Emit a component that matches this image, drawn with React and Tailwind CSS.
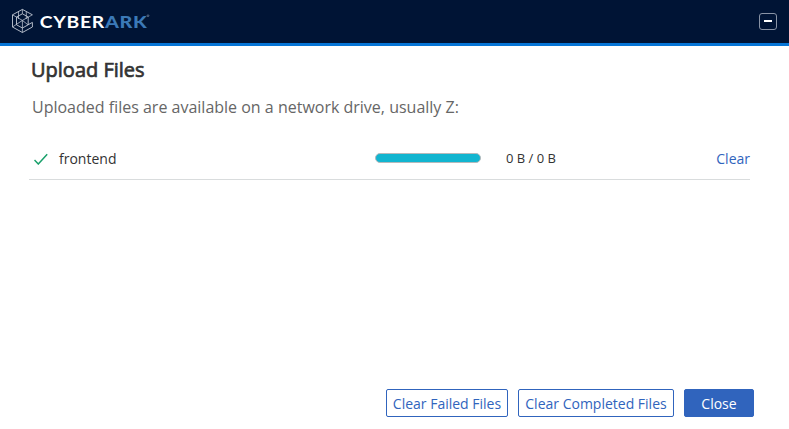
function CyberArkLogo() {
  return (
    <svg width="142" height="28" viewBox="0 0 142 28" className="block" role="img" aria-label="CyberArk">
      <g fill="none" stroke="#c3cad5" strokeWidth="0.9" strokeLinejoin="round">
        <path d="M21.4 7.8 11.4 2.4 1.5 7.8V20L11.4 25.5 21.4 20V15.4L17 17.8" />
        <path d="M5.5 10 11.4 6.8 17.2 10V17.8L11.4 21 5.5 17.8Z" />
        <path d="M1.5 7.8 11.4 13.4 21.4 7.8M11.4 13.4V25.5M1.5 20 11.4 13.4M11.4 13.4 17 17.8M11.4 2.4V6.8M7.5 4.6V12M15.3 4.6V12" strokeWidth="0.75" />
      </g>
      <text x="28.8" y="21.2" fontFamily="Lato, sans-serif" fontSize="17.2" fontWeight="700" letterSpacing="0.6" fill="#ffffff" textLength="65" lengthAdjust="spacingAndGlyphs">CYBER</text>
      <text x="94" y="21.2" fontFamily="Lato, sans-serif" fontSize="17.2" fontWeight="900" letterSpacing="0.6" fill="#3b79b7" textLength="42.5" lengthAdjust="spacingAndGlyphs">ARK</text>
      <circle cx="137" cy="8.7" r="0.9" fill="none" stroke="#8e9bb0" strokeWidth="0.6" />
    </svg>
  );
}

export default function App() {
  return (
    <div className="flex h-[429px] w-[789px] flex-col overflow-hidden bg-white font-['Open_Sans',sans-serif] text-[#333]">
      <header className="flex h-[46px] shrink-0 items-start justify-between border-b-[3px] border-[#0675d6] bg-[#001435] pl-[11px] pr-3">
        <div className="pt-[7px]"><CyberArkLogo /></div>
        <button aria-label="Minimize" className="mt-[13px] flex h-[17px] w-[18px] justify-center rounded-[3px] border border-[#8993a5] pt-[6px]">
          <span className="h-[2px] w-2 bg-white" />
        </button>
      </header>
      <main className="flex flex-1 flex-col pl-[29px] pr-[35px]">
        <h1 className="mt-[10px] pl-[2px] text-[20px] leading-[28px] [-webkit-text-stroke:0.7px_#333]">Upload Files</h1>
        <p className="mt-[11px] pl-[3px] text-[16px] leading-6 text-[#666]">Uploaded files are available on a network drive, usually Z:</p>
        <div className="mt-[20px] mr-1 flex h-[41px] items-center border-b border-[#d9dcdd]">
          <svg width="14" height="12" viewBox="0 0 14 12" className="ml-[5px]" fill="none" stroke="#18a06a" strokeWidth="1.5">
            <path d="M.5 7 4.3 11 13.2 1.2" />
          </svg>
          <span className="ml-[11px] w-[316px] text-[14px] leading-5">frontend</span>
          <div className="mb-[2px] h-[10px] w-[106px] rounded-full border border-[#b5b9bb] bg-[#12b5d0]" />
          <span className="ml-[25px] mb-[2px] text-[13px] leading-5">0 B / 0 B</span>
          <button className="ml-auto text-[14px] leading-5 text-[#3064bd]">Clear</button>
        </div>
        <footer className="mt-auto mb-3 flex h-7 justify-end gap-[10px] text-[14px]">
          <button className="w-[122px] rounded-[2px] border border-[#3064bd] pt-px whitespace-nowrap text-[#3064bd]">Clear Failed Files</button>
          <button className="w-[156px] rounded-[2px] border border-[#3064bd] pt-px whitespace-nowrap text-[#3064bd]">Clear Completed Files</button>
          <button className="w-[70px] rounded-[2px] border border-[#3064bd] bg-[#3064bd] pt-px text-white">Close</button>
        </footer>
      </main>
    </div>
  );
}
